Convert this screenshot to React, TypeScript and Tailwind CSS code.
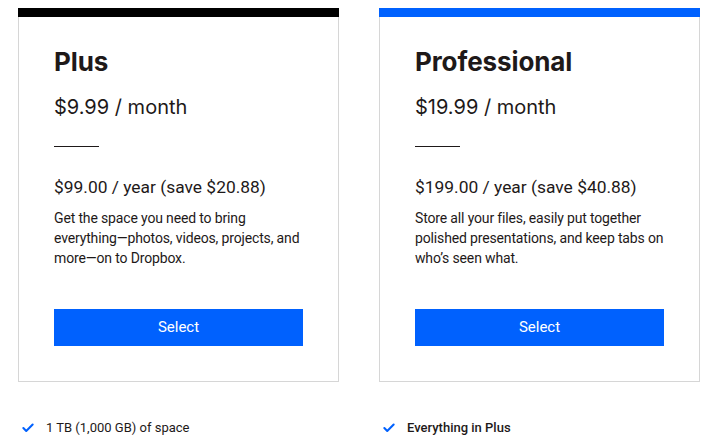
import { Check } from "lucide-react";

type Plan = {
  name: string;
  month: string;
  year: string;
  blurb: string;
  bar: string;
  feature: string;
  bold: boolean;
};

const plans: Plan[] = [
  {
    name: "Plus",
    month: "$9.99 / month",
    year: "$99.00 / year (save $20.88)",
    blurb:
      "Get the space you need to bring everything\u2014photos, videos, projects, and more\u2014on to Dropbox.",
    bar: "bg-black",
    feature: "1 TB (1,000 GB) of space",
    bold: false,
  },
  {
    name: "Professional",
    month: "$19.99 / month",
    year: "$199.00 / year (save $40.88)",
    blurb:
      "Store all your files, easily put together polished presentations, and keep tabs on who\u2019s seen what.",
    bar: "bg-[#0061fe]",
    feature: "Everything in Plus",
    bold: true,
  },
];

function PlanCard({ plan }: { plan: Plan }) {
  return (
    <div className="w-[321px] shrink-0">
      <div className="border border-t-0 border-[#d6d6d6] bg-white">
        <div className={`h-[9px] -mx-px ${plan.bar}`} />
        <div className="px-[35px] pt-[29px] pb-[35px]">
          <h2 className="text-[26px] leading-[31px] font-bold text-[#1e1919] font-['Inter',sans-serif] tracking-[-0.1px]">
            {plan.name}
          </h2>
          <p className="mt-[16px] text-[20px] leading-[28px] text-[#1e1919] font-['Inter',sans-serif]">
            {plan.month}
          </p>
          <div className="mt-[25px] w-[45px] h-px bg-[#1e1919]" />
          <p className="mt-[28px] text-[17.4px] leading-[24px] text-[#1e1919] font-['Roboto',sans-serif]">
            {plan.year}
          </p>
          <p className="mt-[9px] text-[14px] leading-[20px] tracking-[-0.15px] text-[#1e1919] font-['Roboto',sans-serif] -mr-[4px]">
            {plan.blurb}
          </p>
          <button className="mt-[41px] w-full h-[37px] bg-[#0061fe] text-white text-[15px] font-['Roboto',sans-serif]">
            Select
          </button>
        </div>
      </div>
      <div className="mt-[37px] flex items-center gap-[11px] pl-[3px]">
        <Check className="w-[14px] h-[14px] text-[#0061fe]" strokeWidth={3.5} />
        <span
          className={`text-[13px] leading-[18px] text-[#1e1919] font-['Roboto',sans-serif] ${
            plan.bold ? "font-medium" : ""
          }`}
        >
          {plan.feature}
        </span>
      </div>
    </div>
  );
}

export default function App() {
  return (
    <div className="min-h-screen bg-white px-[18px] pt-[8px] flex gap-[40px]">
      {plans.map((p) => (
        <PlanCard key={p.name} plan={p} />
      ))}
    </div>
  );
}
